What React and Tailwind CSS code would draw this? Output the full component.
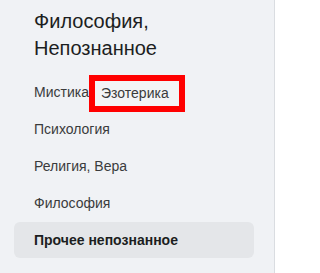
import React from 'react'

const ITEMS = [
  { id: 'mystic', label: 'Мистика' },
  { id: 'psy', label: 'Психология' },
  { id: 'religion', label: 'Религия, Вера' },
  { id: 'philosophy', label: 'Философия' },
  { id: 'other', label: 'Прочее непознанное', active: true },
]

export default function App() {
  return (
    <div className="h-[273px] w-[282px] flex overflow-hidden bg-white font-['Liberation_Sans',Arial,sans-serif]">
      {/* Sidebar */}
      <aside className="w-[275px] shrink-0 bg-[#f0f2f5] border-r border-[#dadde1] pt-[8px]">
        <h2 className="pl-[34px] text-[20px] leading-[27px] text-[#1c1e21] mb-[12px]">
          Философия,
          <br />
          Непознанное
        </h2>
        <nav className="pl-[14px] pr-[20px] flex flex-col gap-px">
          {ITEMS.map((item, i) => (
            <div
              key={item.id}
              className={`relative h-9 flex items-center px-5 rounded-md text-[14px] ${item.active ? 'bg-[#e4e6e9] font-bold text-[#1c1e21]' : 'text-[#3a3b3c]'}`}
            >
              {item.label}
              {i === 0 && (
                <div className="absolute left-[75px] top-px w-[96px] h-[37px] border-[6px] border-[#ff0000] bg-[#f3f4f6] flex items-center pl-[6px] text-[14px] text-[#3a3b3c]">
                  Эзотерика
                </div>
              )}
            </div>
          ))}
        </nav>
      </aside>
      <main className="flex-1 bg-white" />
    </div>
  )
}
